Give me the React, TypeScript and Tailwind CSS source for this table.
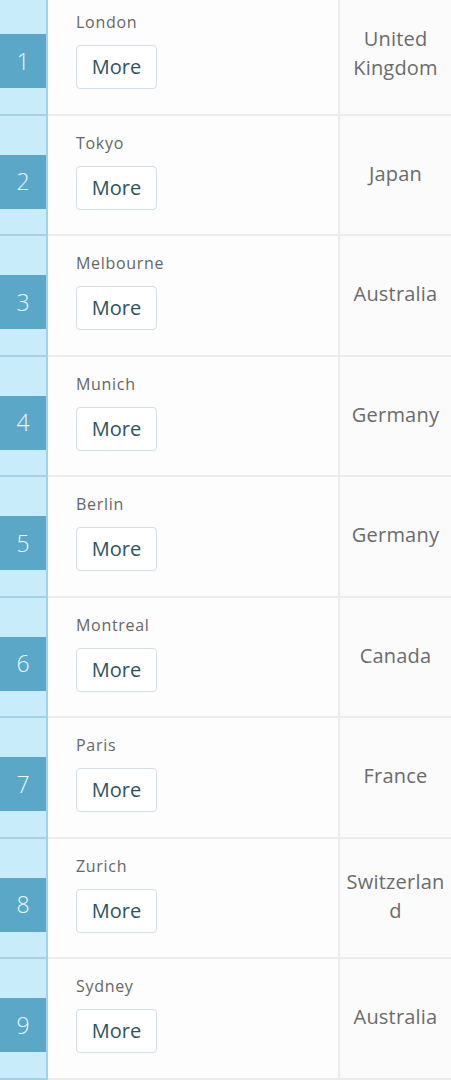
import React from "react";

const rows = [
  { n: 1, city: "London", country: "United Kingdom" },
  { n: 2, city: "Tokyo", country: "Japan" },
  { n: 3, city: "Melbourne", country: "Australia" },
  { n: 4, city: "Munich", country: "Germany" },
  { n: 5, city: "Berlin", country: "Germany" },
  { n: 6, city: "Montreal", country: "Canada" },
  { n: 7, city: "Paris", country: "France" },
  { n: 8, city: "Zurich", country: "Switzerland" },
  { n: 9, city: "Sydney", country: "Australia" },
];

export default function App() {
  return (
    <div className="w-[451px] h-[1080px] overflow-hidden bg-[#fbfbfb]">
      <div className="-mt-[5px]">
        {rows.map((r) => (
          <div key={r.n} className="flex h-[120.5px]">
            <div className="w-[48px] shrink-0 bg-[#c9ecfb] border-r-2 border-b-2 border-[#a3d2e6] pt-[39px]">
              <div
                className="h-[54px] w-[46px] bg-[#5aa7c7] flex items-center justify-center text-[23px] font-light text-[#eef8fc]"
                style={{ fontFamily: '"Open Sans", sans-serif' }}
              >
                {r.n}
              </div>
            </div>
            <div className="w-[290px] shrink-0 border-b-2 border-[#ececec] bg-[#fdfdfd] pl-[28px] pt-[15px]">
              <div
                className="text-[16px] leading-[24px] text-[#666666] tracking-[0.7px]"
                style={{ fontFamily: '"Open Sans", sans-serif' }}
              >
                {r.city}
              </div>
              <div
                className="mt-[11px] w-[81px] h-[44px] border border-[#d3dfe4] rounded-[4px] bg-white flex items-center justify-center text-[20px] text-[#2d5460]"
                style={{ fontFamily: '"Open Sans", sans-serif' }}
              >
                More
              </div>
            </div>
            <div className="w-[113px] shrink-0 border-l-2 border-b-2 border-[#ececec] bg-[#fbfbfb] flex items-center justify-center px-[2px]">
              <div
                className="w-full min-w-0 -mt-[3px] text-center text-[20px] leading-[29px] text-[#6b6b6b] break-words tracking-[0.2px]"
                style={{ fontFamily: '"Open Sans", sans-serif' }}
              >
                {r.country}
              </div>
            </div>
          </div>
        ))}
      </div>
    </div>
  );
}
